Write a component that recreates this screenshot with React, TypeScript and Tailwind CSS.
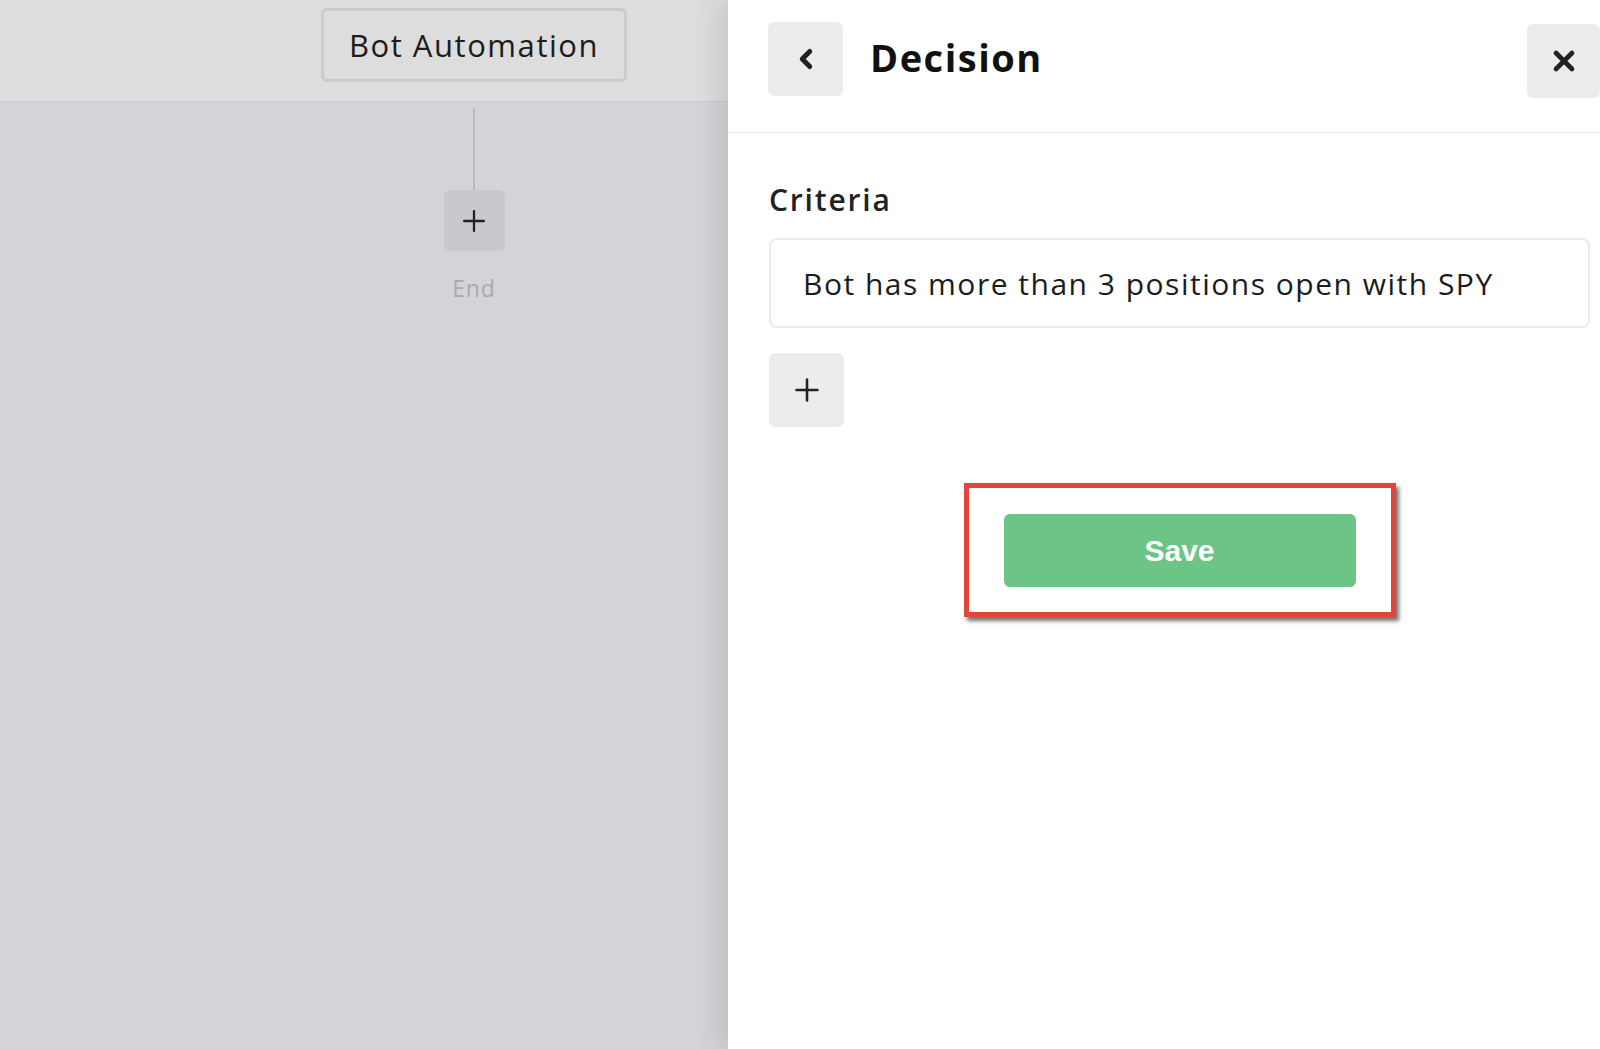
import React from 'react';
import { ChevronLeft, X, Plus } from 'lucide-react';

const font = { fontFamily: '"Open Sans", "Noto Sans", sans-serif' };

const FlowCanvas: React.FC = () => (
  <div className="w-[728px] shrink-0 h-full flex flex-col bg-[#d3d4d7]">
    <div className="h-[102px] bg-[#dddddd] border-b border-[#cfcfd1] flex justify-center pt-[8px]">
      <div className="w-[306px] h-[74px] ml-[220px] rounded-[6px] border-[3px] border-[#cbcbcb] flex items-center justify-center text-[31px] tracking-[0.05em] text-[#1c1c1c]">
        Bot Automation
      </div>
    </div>
    <div className="flex flex-col items-center ml-[220px]">
      <div className="w-[2px] h-[82px] mt-[6px] bg-[#b9babd]" />
      <div className="w-[61px] h-[61px] rounded-[6px] bg-[#c8c9cd] flex items-center justify-center text-[#222]">
        <Plus className="w-[34px] h-[34px]" strokeWidth={1.6} />
      </div>
      <div className="mt-[20px] text-[23px] tracking-[0.04em] text-[#a9aaad]">End</div>
    </div>
  </div>
);

const DecisionPanel: React.FC = () => (
  <div className="flex-1 h-full bg-white flex flex-col shadow-[-10px_0_24px_rgba(0,0,0,0.10)] z-10">
    <div className="h-[133px] border-b border-[#ececec] flex items-start pt-[22px] pl-[40px]">
      <button className="w-[75px] h-[74px] rounded-[6px] bg-[#ececef] flex items-center justify-center text-[#222]">
        <ChevronLeft className="w-[30px] h-[30px]" strokeWidth={4} />
      </button>
      <h1 className="ml-[27px] mt-[9px] text-[38px] font-bold tracking-[0.04em] text-[#111] leading-[52px]">Decision</h1>
      <button className="ml-auto mt-[2px] w-[73px] h-[74px] rounded-[6px] bg-[#ececef] flex items-center justify-center text-[#222]">
        <X className="w-[32px] h-[32px]" strokeWidth={3.5} />
      </button>
    </div>
    <div className="pl-[41px] pr-[10px] pt-[45px] flex flex-col">
      <h2 className="text-[30px] font-semibold tracking-[0.06em] text-[#222] leading-[44px]">Criteria</h2>
      <div className="mt-[16px] h-[90px] rounded-[8px] border-2 border-[#ebebeb] flex items-center pl-[32px] text-[30px] tracking-[0.05em] text-[#1c1c1c]">
        Bot has more than 3 positions open with SPY
      </div>
      <button className="mt-[25px] w-[75px] h-[74px] rounded-[6px] bg-[#ececef] flex items-center justify-center text-[#222]">
        <Plus className="w-[36px] h-[36px]" strokeWidth={1.7} />
      </button>
      <div className="mt-[56px] self-center border-[5px] border-[#e5443a] px-[35px] pt-[26px] pb-[25px] shadow-[3px_4px_4px_rgba(0,0,0,0.55)]">
        <button
          className="w-[352px] h-[73px] rounded-[6px] bg-[#6cc487] text-white text-[30px] font-bold"
          style={{ fontFamily: '"Liberation Sans", Arial, sans-serif' }}
        >
          Save
        </button>
      </div>
    </div>
  </div>
);

export default function App() {
  return (
    <div className="w-[1600px] h-[1049px] flex overflow-hidden" style={font}>
      <FlowCanvas />
      <DecisionPanel />
    </div>
  );
}
